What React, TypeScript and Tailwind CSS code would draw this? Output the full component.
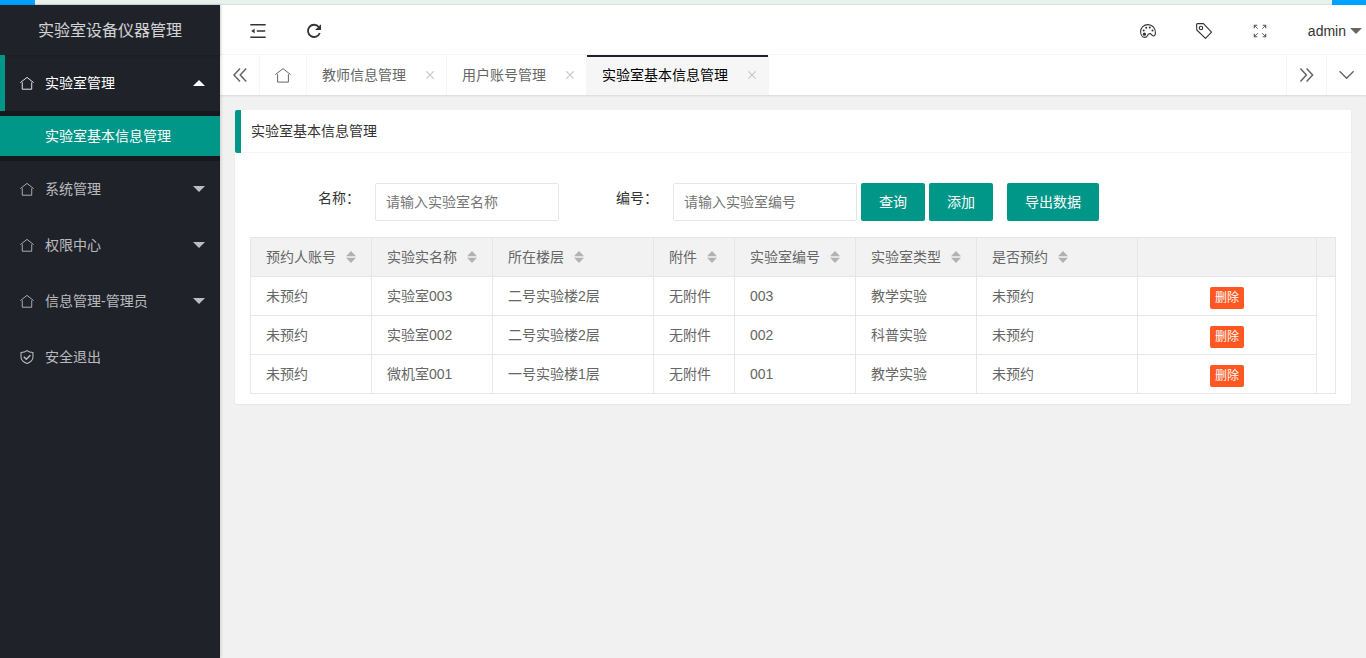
import type { ReactNode } from "react";

const SORT_COLUMNS = ["预约人账号", "实验实名称", "所在楼层", "附件", "实验室编号", "实验室类型", "是否预约"];

const ROWS = [
  ["未预约", "实验室003", "二号实验楼2层", "无附件", "003", "教学实验", "未预约"],
  ["未预约", "实验室002", "二号实验楼2层", "无附件", "002", "科普实验", "未预约"],
  ["未预约", "微机室001", "一号实验楼1层", "无附件", "001", "教学实验", "未预约"],
];

const TABS = [
  { label: "教师信息管理", active: false },
  { label: "用户账号管理", active: false },
  { label: "实验室基本信息管理", active: true },
];

function HomeIcon({ className = "size-[14px]" }: { className?: string }) {
  return (
    <svg viewBox="0 0 16 16" className={className} fill="none" stroke="currentColor" strokeWidth="1">
      <path d="M0.4 7.6 8 1.6l7.6 6M2.6 7.2v7.9h10.8V7.2" />
    </svg>
  );
}

function ShieldIcon() {
  return (
    <svg viewBox="0 0 16 16" className="size-[14px]" fill="none" stroke="currentColor" strokeWidth="1.2">
      <path d="M8 0.8C6.2 2.2 3.8 2.8 1.2 2.8v5.4c0 3.4 2.8 5.6 6.8 7.2 4-1.6 6.8-3.8 6.8-7.2V2.8C12.2 2.8 9.8 2.2 8 .8z" />
      <path d="m4.4 7.8 2.8 2.8 4.6-4.6" strokeWidth="1.6" />
    </svg>
  );
}

function Caret({ up = false, className = "" }: { up?: boolean; className?: string }) {
  return (
    <svg viewBox="0 0 12 6" className={`h-[6px] w-3 ${className}`} fill="currentColor">
      <path d={up ? "M0 6 6 0l6 6z" : "M0 0h12L6 6z"} />
    </svg>
  );
}

function DoubleChevron({ right = false }: { right?: boolean }) {
  return (
    <svg viewBox="0 0 16 16" className="size-4" fill="none" stroke="currentColor" strokeWidth="1.5">
      <path d={right ? "m1.4 1.5 6 6.5-6 6.5M7.6 1.5l6 6.5-6 6.5" : "M8 1.5 2 8l6 6.5M14.2 1.5l-6 6.5 6 6.5"} />
    </svg>
  );
}

function SortIcon() {
  return (
    <svg viewBox="0 0 10 12" className="h-3 w-[10px] shrink-0" fill="#b2b2b2">
      <path d="M0 5.2 5 0l5 5.2zM0 6.8h10L5 12z" />
    </svg>
  );
}

function NavItem({ icon, label, caret = true }: { icon: ReactNode; label: string; caret?: boolean }) {
  return (
    <li>
      <a href="#" className="flex h-14 items-center pr-[15px] pl-5 text-white/70">
        {icon}
        <span className="ml-[11px] flex-1">{label}</span>
        {caret && <Caret />}
      </a>
    </li>
  );
}

function Sidebar() {
  return (
    <aside className="z-10 w-[220px] shrink-0 bg-[#20222a] shadow-[1px_0_3px_rgba(0,0,0,0.15)]">
      <div className="flex h-[50px] items-center justify-center pt-[2px] text-base text-white/80 shadow-[0_1px_2px_rgba(0,0,0,0.15)]">
        实验室设备仪器管理
      </div>
      <nav>
        <ul>
          <li>
            <a href="#" className="flex h-14 items-center border-l-[5px] border-[#009688] pr-[15px] pl-[15px] text-white">
              <HomeIcon />
              <span className="ml-[11px] flex-1">实验室管理</span>
              <Caret up />
            </a>
            <div className="bg-[#17181d] py-[5px]">
              <a href="#" className="flex h-10 items-center bg-[#009688] pl-[45px] text-white">
                实验室基本信息管理
              </a>
            </div>
          </li>
          <NavItem icon={<HomeIcon />} label="系统管理" />
          <NavItem icon={<HomeIcon />} label="权限中心" />
          <NavItem icon={<HomeIcon />} label="信息管理-管理员" />
          <NavItem icon={<ShieldIcon />} label="安全退出" caret={false} />
        </ul>
      </nav>
    </aside>
  );
}

function Header() {
  return (
    <header className="flex h-[50px] items-center justify-between border-b border-[#f6f6f6] bg-white pt-[2px] text-[#333]">
      <div className="flex items-center gap-10 pl-[30px]">
        <button type="button" aria-label="侧边伸缩">
          <svg viewBox="0 0 16 16" className="size-4" fill="none" stroke="currentColor" strokeWidth="1.6">
            <path d="M0.3 1.8h15.4M6.8 8h8.4M0.3 14.2h15.4" />
            <path d="M1.2 8 4.6 5.8v4.4z" fill="currentColor" stroke="none" />
          </svg>
        </button>
        <button type="button" aria-label="刷新">
          <svg viewBox="0 0 16 16" className="size-4" fill="none" stroke="currentColor" strokeWidth="1.8">
            <path d="M12.8 4A6.1 6.1 0 1 0 13.8 10" />
            <path d="M15 1.2v5.9H9.1z" fill="currentColor" stroke="none" />
          </svg>
        </button>
      </div>
      <div className="flex items-center">
        <div className="flex items-center gap-10 pr-10">
          <button type="button" aria-label="主题">
            <svg viewBox="0 0 16 16" className="size-4" fill="none" stroke="currentColor" strokeWidth="1.1">
              <path d="M8 1.6C3.8 1.6.6 4.8.6 8.6c0 3.2 1.8 5.8 4.2 5.8 1.6 0 2.2-1 2.7-2 .6-1.2 1.3-1.8 2.5-1.8 1.4 0 1.6 2.2 3.4 2.4 1.4.1 2-1.6 2-3.6C15.4 5.2 12.2 1.6 8 1.6z" />
              <g fill="currentColor" stroke="none">
                <circle cx="4.4" cy="11.2" r="1.6" />
                <circle cx="3.7" cy="7.4" r="1" />
                <circle cx="6.2" cy="4.7" r="1" />
                <circle cx="9.8" cy="4.6" r="1" />
                <circle cx="12.5" cy="7.4" r="1" />
              </g>
            </svg>
          </button>
          <button type="button" aria-label="便签">
            <svg viewBox="0 0 16 16" className="size-4" fill="none" stroke="currentColor" strokeWidth="1.1">
              <path d="M0.6 1.6Q.6.6 1.6.6L7.4.6l8.1 8.6-6 6.2L.8 7z" strokeLinejoin="round" />
              <circle cx="5" cy="5" r="1.7" />
            </svg>
          </button>
          <button type="button" aria-label="全屏" className="text-[#555]">
            <svg viewBox="0 0 16 16" className="size-4" fill="none" stroke="currentColor" strokeWidth="1.1">
              <path d="M2.3 5.3v-3h3M10.7 2.3h3v3M13.7 10.7v3h-3M5.3 13.7h-3v-3" />
              <path d="m2.3 2.3 3.5 3.5M13.7 2.3l-3.5 3.5M13.7 13.7l-3.5-3.5M2.3 13.7l3.5-3.5" strokeWidth="0.9" />
            </svg>
          </button>
        </div>
        <button type="button" className="flex items-center gap-1 pr-1">
          admin
          <Caret className="text-[#666]" />
        </button>
      </div>
    </header>
  );
}

function TabBar() {
  return (
    <div className="flex h-10 bg-white text-[#666] shadow-[0_1px_2px_rgba(0,0,0,0.1)]">
      <button type="button" aria-label="向左" className="flex w-10 items-center justify-center border-r border-[#f6f6f6]">
        <DoubleChevron />
      </button>
      <a href="#" aria-label="首页" className="flex w-[47px] items-center justify-center border-r border-[#f6f6f6]">
        <HomeIcon className="size-4" />
      </a>
      {TABS.map((tab) => (
        <div
          key={tab.label}
          className={`relative flex items-center border-r border-[#f6f6f6] pr-3 pl-[15px] ${tab.active ? "bg-[#f6f6f6] text-black" : ""}`}
        >
          {tab.active && <span className="absolute inset-x-0 top-0 h-[2px] bg-[#20222a]" />}
          <a href="#">{tab.label}</a>
          <button type="button" aria-label="关闭" className="ml-5 text-[#c8c8c8]">
            <svg viewBox="0 0 8 8" className="size-2" fill="none" stroke="currentColor" strokeWidth="1.2">
              <path d="m.3.3 7.4 7.4M7.7.3.3 7.7" />
            </svg>
          </button>
        </div>
      ))}
      <button type="button" aria-label="向右" className="ml-auto flex w-10 items-center justify-center border-l border-[#f6f6f6]">
        <DoubleChevron right />
      </button>
      <button type="button" aria-label="更多" className="flex w-10 items-center justify-center border-l border-[#f6f6f6]">
        <svg viewBox="0 0 16 16" className="size-4" fill="none" stroke="currentColor" strokeWidth="1.4">
          <path d="m.6 4.3 7 7 7-7" />
        </svg>
      </button>
    </div>
  );
}

function SearchForm() {
  const input =
    "h-[38px] w-[184px] rounded-xs border border-[#e6e6e6] bg-white px-[10px] outline-none placeholder:text-[#757575]";
  const button = "h-[38px] rounded-xs bg-[#009688] px-[18px] text-white";

  return (
    <form className="flex flex-wrap pl-[68px] text-[#333]">
      <label htmlFor="lab-name" className="pt-[5px] pr-[15px]">名称：</label>
      <input id="lab-name" type="text" placeholder="请输入实验室名称" className={input} />
      <label htmlFor="lab-code" className="ml-[57px] pt-[5px] pr-[15px]">编号：</label>
      <input id="lab-code" type="text" placeholder="请输入实验室编号" className={input} />
      <div className="ml-1 flex">
        <button type="button" className={button}>查询</button>
        <button type="button" className={`${button} ml-1`}>添加</button>
        <button type="button" className={`${button} ml-[14px]`}>导出数据</button>
      </div>
    </form>
  );
}

function LabTable() {
  const cell = "border-r border-b border-[#e6e6e6] px-[15px] text-left font-normal whitespace-nowrap";

  return (
    <table className="mt-4 w-full table-fixed border-separate border-spacing-0 border-t border-l border-[#e6e6e6] text-[#666]">
      <colgroup>
        <col className="w-[121px]" />
        <col className="w-[121px]" />
        <col className="w-[161px]" />
        <col className="w-[81px]" />
        <col className="w-[121px]" />
        <col className="w-[121px]" />
        <col className="w-[161px]" />
        <col />
        <col className="w-[19px]" />
      </colgroup>
      <thead className="bg-[#f2f2f2]">
        <tr className="h-[39px]">
          {SORT_COLUMNS.map((name) => (
            <th key={name} scope="col" className={cell}>
              <span className="flex items-center gap-[10px]">
                {name}
                <SortIcon />
              </span>
            </th>
          ))}
          <th className={cell} />
          <th className="border-r border-b border-[#e6e6e6]" />
        </tr>
      </thead>
      <tbody>
        {ROWS.map((row, i) => (
          <tr key={row[1]} className="h-[39px]">
            {row.map((value, j) => (
              <td key={j} className={cell}>{value}</td>
            ))}
            <td className={cell}>
              <div className="flex justify-center pt-1">
                <button type="button" className="h-[22px] rounded-xs bg-[#ff5722] px-[5px] text-xs text-white">
                  删除
                </button>
              </div>
            </td>
            {i === 0 && <td rowSpan={ROWS.length} className="border-r border-b border-[#e6e6e6]" />}
          </tr>
        ))}
      </tbody>
    </table>
  );
}

export default function App() {
  return (
    <div className="flex min-h-screen flex-col bg-[#f1f1f1] font-['Liberation_Sans','Noto_Sans_CJK_SC',sans-serif] text-sm">
      {/* 顶部色条 */}
      <div className="flex h-[5px] justify-between border-b border-[#d3e2db] bg-[#e9f1ed]">
        <span className="h-[5px] w-[35px] bg-[#00a2ff]" />
        <span className="h-[5px] w-[34px] bg-[#00a2ff]" />
      </div>
      <div className="flex flex-1">
        <Sidebar />
        <div className="min-w-0 flex-1">
          <Header />
          <TabBar />
          <main className="p-[15px]">
            <section className="rounded-xs bg-white shadow-[0_1px_2px_rgba(0,0,0,0.05)]">
              <h2 className="flex h-[43px] items-center rounded-l-xs border-l-[6px] border-[#009688] pb-[2px] pl-[10px] text-[#333] shadow-[inset_0_-1px_0_#f6f6f6]">
                实验室基本信息管理
              </h2>
              <div className="px-[15px] pt-[30px] pb-[10px]">
                <SearchForm />
                <LabTable />
              </div>
            </section>
          </main>
        </div>
      </div>
    </div>
  );
}
